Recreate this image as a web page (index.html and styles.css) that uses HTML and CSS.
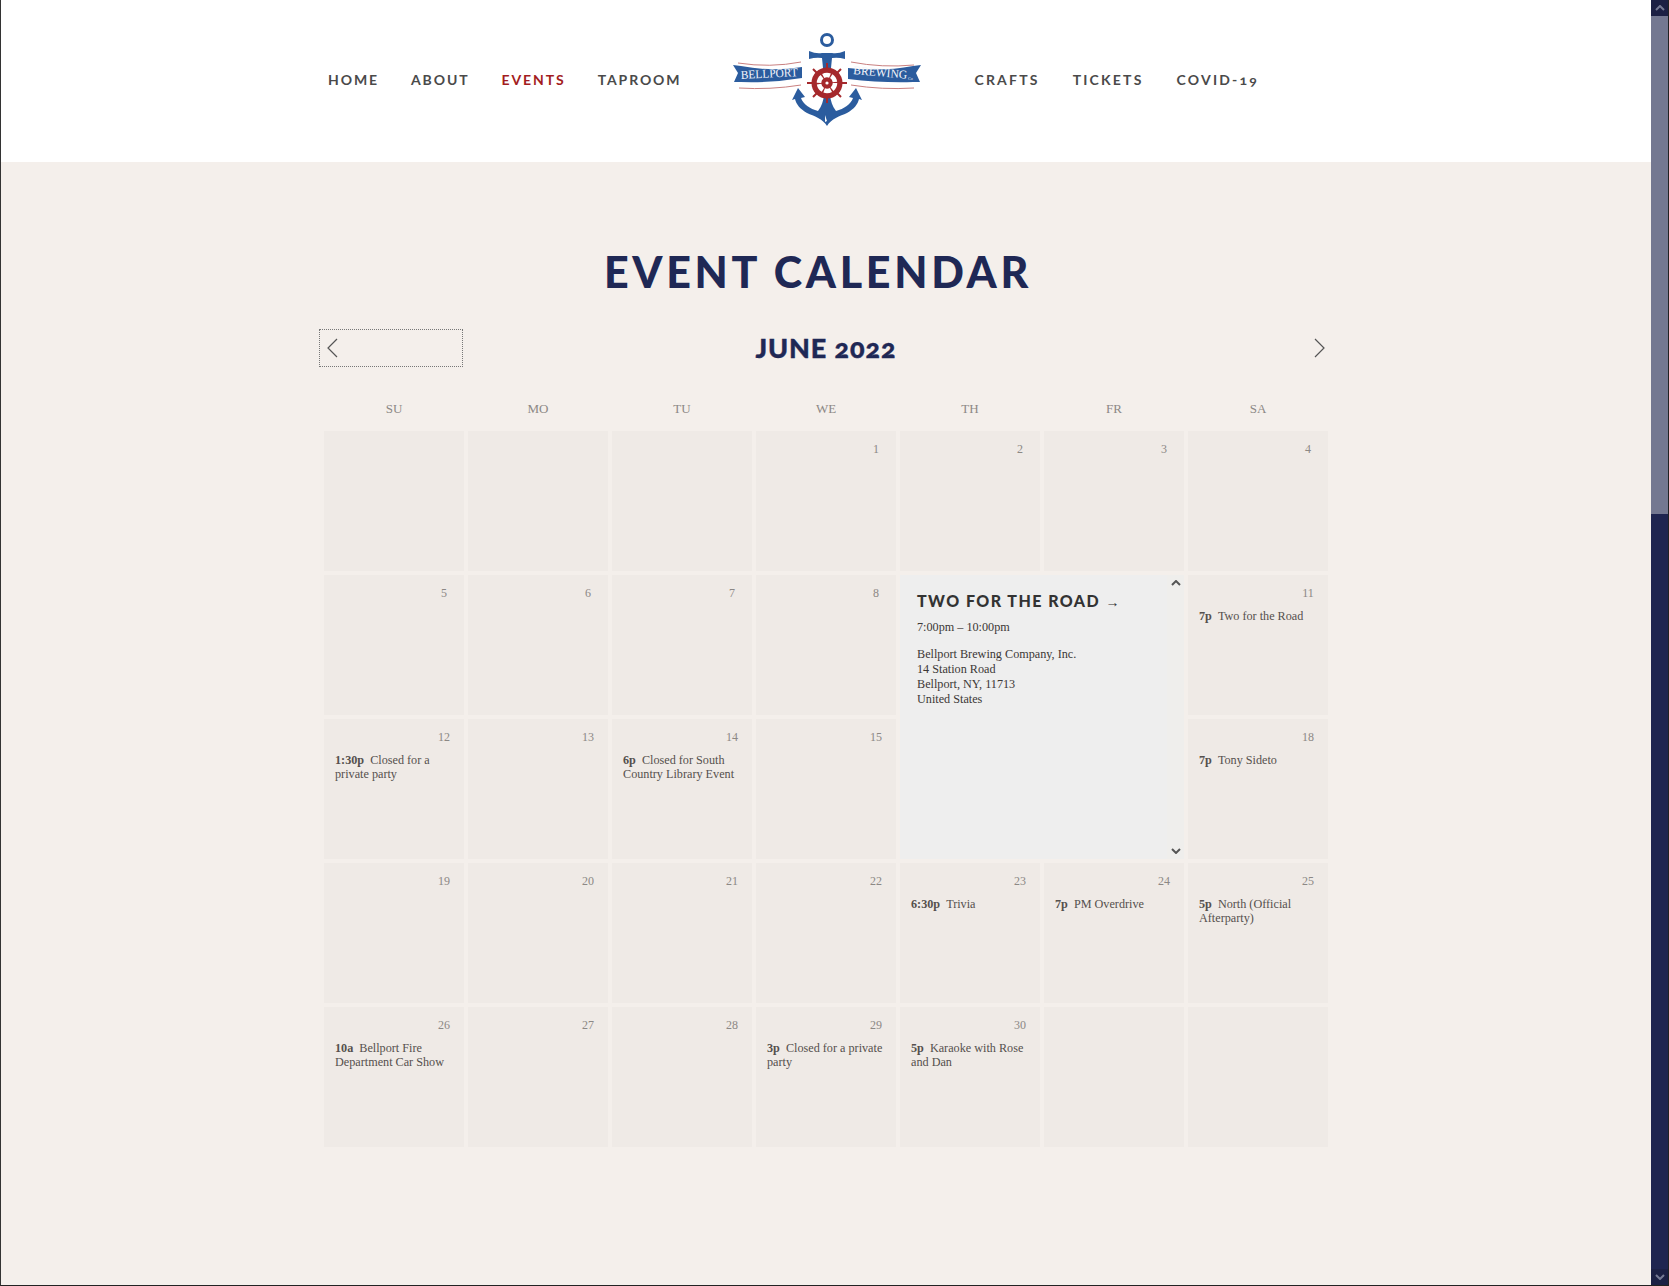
FILE: index.html
```html
<html>
	<head>
		<link rel="stylesheet" href="styles.css">
	</head>
	<body>
		<div class="page">
			<header class="site-header">
				<nav class="nav">
					<a class="nav-link">HOME</a>
					<a class="nav-link">ABOUT</a>
					<a class="nav-link active">EVENTS</a>
					<a class="nav-link">TAPROOM</a>
					<svg class="logo" viewBox="0 0 190 96">
						<path class="stripe" d="M6 33 Q38 38 69 32"/>
						<path class="stripe" d="M7 58 Q38 60 69 55"/>
						<path class="stripe" d="M119 32 Q150 38 182 35"/>
						<path class="stripe" d="M119 55 Q150 60 182 58"/>
						<path class="blue" d="M1 35 L9 36 Q40 42 70 37 L70 48 Q40 53 9 52 L2 52 L6 43 Z"/>
						<path class="blue" d="M189 35 L181 36 Q150 42 116 38 L116 49 Q150 53 181 52 L188 52 L184 43 Z"/>
						<text class="ribbon-text" x="9" y="49" textLength="57" lengthAdjust="spacingAndGlyphs" transform="rotate(-3 9 49)">BELLPORT</text>
						<text class="ribbon-text" x="121" y="44" textLength="54" lengthAdjust="spacingAndGlyphs" transform="rotate(5 121 44)">BREWING</text>
						<text class="ribbon-small" x="176" y="50">Co</text>
						<circle class="ring" cx="95" cy="10" r="5.5"/>
						<path class="blue" d="M77 21 Q84 24 90 23 L100 23 Q106 24 113 21 L113 29 Q106 27 100 28 L99 38 L91 38 L90 28 Q84 27 77 29 Z"/>
						<path class="blue" d="M95 96 C91 89 82 86 75 83 C68 79 64 74 63 69 L60 70 L66 58 L73 67 L69 68 C71 74 78 79 86 81 C90 76 91 71 92 66 L98 66 C99 71 100 76 104 81 C112 79 119 74 121 68 L117 67 L124 58 L130 70 L127 69 C126 74 122 79 115 83 C108 86 99 89 95 96 Z"/>
						<path class="white" d="M93 85 L95 91 L93 92 Z"/>
						<path class="spokes" d="M95 33 V73 M75 53 H115 M81 39 L109 67 M109 39 L81 67"/>
						<circle class="red" cx="95" cy="53" r="15.5"/>
						<circle class="hub" cx="95" cy="53" r="8" stroke-dasharray="7 1.38"/>
						<circle class="red" cx="95" cy="53" r="2.8"/>
						<circle class="white" cx="95" cy="53" r="1.6"/>
					</svg>
					<a class="nav-link wide">CRAFTS</a>
					<a class="nav-link wide">TICKETS</a>
					<a class="nav-link wide">COVID-19</a>
				</nav>
			</header>
			<main class="content">
				<h1 class="page-title">EVENT CALENDAR</h1>
				<div class="calendar">
					<div class="month-bar">
						<div class="prev">
							<svg class="arrow" width="11" height="20" viewBox="0 0 11 20"><path d="M10 1 L1 10 L10 19"/></svg>
						</div>
						<div class="month">JUNE 2022</div>
						<svg class="arrow next" width="11" height="20" viewBox="0 0 11 20"><path d="M1 1 L10 10 L1 19"/></svg>
					</div>
					<div class="weekdays">
						<div>SU</div><div>MO</div><div>TU</div><div>WE</div><div>TH</div><div>FR</div><div>SA</div>
					</div>
					<div class="grid">
						<div class="cell"></div>
						<div class="cell"></div>
						<div class="cell"></div>
						<div class="cell"><div class="day">1</div></div>
						<div class="cell"><div class="day">2</div></div>
						<div class="cell"><div class="day">3</div></div>
						<div class="cell"><div class="day">4</div></div>

						<div class="cell"><div class="day">5</div></div>
						<div class="cell"><div class="day">6</div></div>
						<div class="cell"><div class="day">7</div></div>
						<div class="cell"><div class="day">8</div></div>
						<div class="event-panel">
							<div class="event-body">
								<div class="event-title">TWO FOR THE ROAD <span class="event-arrow">→</span></div>
								<div class="event-time">7:00pm – 10:00pm</div>
								<div class="event-address">
									Bellport Brewing Company, Inc.<br>
									14 Station Road<br>
									Bellport, NY, 11713<br>
									United States
								</div>
							</div>
							<div class="event-scroll">
								<svg class="scroll-arrow" width="10" height="6" viewBox="0 0 10 6"><path d="M1 5 L5 1 L9 5"/></svg>
								<svg class="scroll-arrow" width="10" height="6" viewBox="0 0 10 6"><path d="M1 1 L5 5 L9 1"/></svg>
							</div>
						</div>
						<div class="cell"><div class="day">11</div><div class="event"><b>7p</b>Two for the Road</div></div>

						<div class="cell"><div class="day">12</div><div class="event"><b>1:30p</b>Closed for a private party</div></div>
						<div class="cell"><div class="day">13</div></div>
						<div class="cell"><div class="day">14</div><div class="event"><b>6p</b>Closed for South Country Library Event</div></div>
						<div class="cell"><div class="day">15</div></div>
						<div class="cell"><div class="day">18</div><div class="event"><b>7p</b>Tony Sideto</div></div>

						<div class="cell"><div class="day">19</div></div>
						<div class="cell"><div class="day">20</div></div>
						<div class="cell"><div class="day">21</div></div>
						<div class="cell"><div class="day">22</div></div>
						<div class="cell"><div class="day">23</div><div class="event"><b>6:30p</b>Trivia</div></div>
						<div class="cell"><div class="day">24</div><div class="event"><b>7p</b>PM Overdrive</div></div>
						<div class="cell"><div class="day">25</div><div class="event"><b>5p</b>North (Official Afterparty)</div></div>

						<div class="cell"><div class="day">26</div><div class="event"><b>10a</b>Bellport Fire Department Car Show</div></div>
						<div class="cell"><div class="day">27</div></div>
						<div class="cell"><div class="day">28</div></div>
						<div class="cell"><div class="day">29</div><div class="event"><b>3p</b>Closed for a private party</div></div>
						<div class="cell"><div class="day">30</div><div class="event"><b>5p</b>Karaoke with Rose and Dan</div></div>
						<div class="cell"></div>
						<div class="cell"></div>
					</div>
				</div>
			</main>
		</div>
		<div class="scrollbar">
			<div class="scroll-btn"><svg width="10" height="6" viewBox="0 0 10 6"><path d="M1 5 L5 1 L9 5"/></svg></div>
			<div class="scroll-thumb"></div>
			<div class="scroll-track"></div>
			<div class="scroll-btn"><svg width="10" height="6" viewBox="0 0 10 6"><path d="M1 1 L5 5 L9 1"/></svg></div>
		</div>
	</body>
</html>
```

FILE: styles.css
```css
html{
	height: 100%;
	overflow: hidden;
}
body{
	margin: 0;
	height: 100%;
	box-sizing: border-box;
	display: flex;
	background: #f4efeb;
	border-left: 1px solid #333;
	border-right: 1px solid #222;
	border-bottom: 1px solid #222;
	font-family: "Liberation Serif", serif;
	color: #4a4644;
}
.page{
	flex: 1;
	min-width: 0;
}
.site-header{
	background: #fff;
	height: 162px;
}
.nav{
	width: 1000px;
	height: 159px;
	margin: 0 auto;
	padding-left: 4px;
	display: flex;
	align-items: center;
	gap: 32px;
}
.nav-link{
	font-family: Lato, sans-serif;
	font-weight: 700;
	font-size: 14px;
	letter-spacing: 1.9px;
	color: #4a4a4a;
	font-variant-numeric: oldstyle-nums;
}
.nav-link.active{
	color: #a31c20;
}
.nav-link.wide{
	letter-spacing: 2.2px;
	margin-left: 1px;
}
.logo{
	width: 190px;
	height: 96px;
	margin: -3px 19px 0;
}
.blue{
	fill: #2b5c9e;
}
.red{
	fill: #a5282c;
}
.white{
	fill: #fff;
}
.stripe{
	fill: none;
	stroke: #c98080;
	stroke-width: 1;
}
.ring{
	fill: none;
	stroke: #2b5c9e;
	stroke-width: 3;
}
.spokes{
	fill: none;
	stroke: #a5282c;
	stroke-width: 2;
}
.hub{
	fill: none;
	stroke: #fff;
	stroke-width: 4.5;
}
.ribbon-text{
	font-family: "Liberation Serif", serif;
	font-size: 12px;
	fill: #f3f5fa;
}
.ribbon-small{
	font-family: "Liberation Serif", serif;
	font-size: 4px;
	fill: #f3f5fa;
}
.content{
	padding-top: 83px;
}
.page-title{
	margin: 0 16px 0 0;
	font-family: Lato, sans-serif;
	font-weight: 900;
	font-size: 43px;
	line-height: 54px;
	letter-spacing: 3.7px;
	text-align: center;
	color: #1f2855;
}
.calendar{
	width: 1004px;
	margin: 0 auto;
}
.month-bar{
	position: relative;
	height: 38px;
	margin-top: 30px;
	display: flex;
	align-items: center;
	justify-content: center;
}
.prev{
	position: absolute;
	left: -5px;
	top: 0;
	width: 144px;
	height: 38px;
	box-sizing: border-box;
	border: 1px dotted #777;
	display: flex;
	align-items: center;
	padding-left: 7px;
}
.month{
	margin-top: -2px;
	font-family: Lato, sans-serif;
	font-weight: 900;
	font-size: 27px;
	letter-spacing: 0.9px;
	font-variant-numeric: oldstyle-nums;
	-webkit-text-stroke: 0.4px #1f2855;
	color: #1f2855;
}
.arrow path{
	fill: none;
	stroke: #555;
	stroke-width: 1.2;
}
.next{
	position: absolute;
	right: 3px;
	top: 9px;
}
.weekdays{
	display: grid;
	grid-template-columns: repeat(7, 140px);
	column-gap: 4px;
	margin-top: 22px;
	height: 42px;
	line-height: 40px;
	text-align: center;
	font-size: 13px;
	color: #8c8885;
}
.grid{
	display: grid;
	grid-template-columns: repeat(7, 140px);
	grid-auto-rows: 140px;
	gap: 4px;
}
.cell{
	background: #efeae6;
	padding: 10px 11px 0;
	box-sizing: border-box;
}
.day{
	width: 20px;
	margin: 0 -1px 0 auto;
	text-align: center;
	font-size: 12px;
	line-height: 16px;
	color: #8c8885;
}
.event{
	margin-top: 8px;
	font-size: 12.2px;
	line-height: 14px;
	color: #55504d;
}
.event b{
	margin-right: 6px;
}
.event-panel{
	grid-column: span 2;
	grid-row: span 2;
	display: flex;
	background: #eeeeee;
}
.event-body{
	flex: 1;
	padding: 16px 17px 0;
}
.event-title{
	font-family: Lato, sans-serif;
	font-weight: 900;
	font-size: 16px;
	line-height: 19px;
	letter-spacing: 1.45px;
	color: #333;
}
.event-arrow{
	font-family: "Liberation Serif", serif;
	font-weight: 400;
	font-size: 14px;
	letter-spacing: 0;
}
.event-time{
	margin-top: 8px;
	font-size: 12.2px;
	line-height: 15px;
	color: #3c3836;
}
.event-address{
	margin-top: 12px;
	font-size: 12.2px;
	line-height: 15px;
	color: #3c3836;
}
.event-scroll{
	width: 17px;
	padding: 5px 0;
	box-sizing: border-box;
	background: #efeeec;
	display: flex;
	flex-direction: column;
	justify-content: space-between;
	align-items: center;
}
.scroll-arrow path{
	fill: none;
	stroke: #555;
	stroke-width: 2;
}
.scrollbar{
	width: 17px;
	display: flex;
	flex-direction: column;
	background: #1f2550;
}
.scroll-btn{
	height: 16px;
	flex-shrink: 0;
	background: #1c2044;
	display: flex;
	align-items: center;
	justify-content: center;
}
.scroll-btn path{
	fill: none;
	stroke: #777b95;
	stroke-width: 2;
}
.scroll-thumb{
	height: 498px;
	background: #747891;
}
.scroll-track{
	flex: 1;
}
```
